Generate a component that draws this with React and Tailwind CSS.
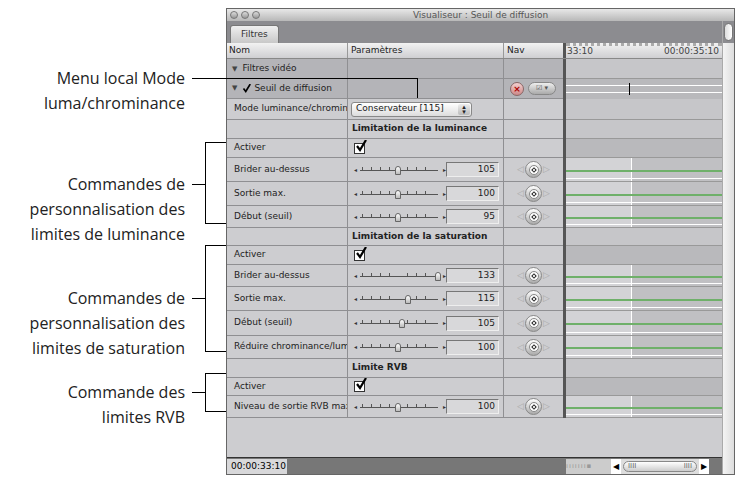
import React from "react";

const F = { fontFamily: '"Lucida Grande","DejaVu Sans","Liberation Sans",sans-serif' };

function Slider({ pos }) {
  return (
    <div className="relative w-[92px] h-[14px] ml-[6px]">
      <span className="absolute left-0 top-[4px] text-[6px] leading-none text-[#333]">◂</span>
      <div className="absolute left-[6px] right-[8px] top-[7px] h-[1px] bg-[#555]" />
      {[0, 1, 2, 3, 5, 6, 7].map((i) => (
        <div key={i} className="absolute top-[4px] w-[1px] h-[3px] bg-[#555]" style={{ left: 8 + i * 9 }} />
      ))}
      <span className="absolute right-0 top-[4px] text-[6px] leading-none text-[#333]">▸</span>
      <div className="absolute top-[3px] w-[6px] h-[9px] bg-gradient-to-b from-white to-[#bbb] border border-[#666] rounded-t-[3px]" style={{ left: pos }} />
    </div>
  );
}

function Nav() {
  return (
    <div className="flex items-center justify-center gap-[1px] w-full">
      <span className="text-[9px] text-[#aaa] leading-none">◁</span>
      <div className="w-[17px] h-[17px] rounded-full bg-gradient-to-b from-white to-[#aaa] border border-[#888] flex items-center justify-center">
        <div className="w-[10px] h-[10px] rounded-full bg-white border border-[#888] flex items-center justify-center">
          <div className="w-[4px] h-[4px] rotate-45 border-[1.5px] border-[#222]" />
        </div>
      </div>
      <span className="text-[9px] text-[#aaa] leading-none">▷</span>
    </div>
  );
}

const Tick = ({ cls }) => (
  <svg viewBox="0 0 12 12" className={cls}><path d="M2 6 L5 10 L11 0" fill="none" stroke="#000" strokeWidth="2.2" /></svg>
);

function Check() {
  return (
    <div className="ml-[6px] w-[11px] h-[11px] border border-[#333] bg-white relative">
      <Tick cls="absolute left-[0px] top-[-4px] w-[12px] h-[12px]" />
    </div>
  );
}

function TL({ kind }) {
  if (kind === "dark") return <div className="h-full bg-[#b9b9bc] border-b border-[#999]" />;
  if (kind === "seuil")
    return (
      <div className="h-full bg-[#b9b9bc] flex flex-col justify-center gap-[6px] relative">
        <div className="h-[1px] bg-white" />
        <div className="h-[1px] bg-white" />
        <div className="absolute left-[63px] top-[4px] w-[1px] h-[12px] bg-black" />
      </div>
    );
  if (kind === "slider")
    return (
      <div className="h-full flex relative border-b border-[#999]">
        <div className="w-[66px] bg-[#d3d3d6] border-r border-white" />
        <div className="flex-1 bg-[#c0c0c3]" />
        <div className="absolute left-0 right-0 top-1/2 h-[2px] bg-[#6fb06a]" />
        <div className="absolute left-0 right-0 bottom-[2px] h-[1px] bg-white" />
      </div>
    );
  return <div className="h-full bg-[#c6c6c9] border-b border-[#999]" />;
}

function Row({ h, nom, params, nav, tl, dark, bold }) {
  const bg = dark ? "bg-[#b4b4b8]" : "bg-[#cdcdd0]";
  return (
    <div className="flex" style={{ height: h }}>
      <div className={`w-[121px] ${bg} border-b border-r border-[#8f8f92] flex items-center text-[9px] text-[#222] overflow-hidden whitespace-nowrap`}>{nom}</div>
      <div className={`w-[156px] ${bg} border-b border-r border-[#8f8f92] flex items-center text-[9px] text-[#222] whitespace-nowrap ${bold ? "font-bold" : ""}`}>{params}</div>
      <div className={`w-[59px] ${bg} border-b border-[#8f8f92] flex items-center`}>{nav}</div>
      <div className="w-[3px] bg-[#555]" />
      <div className="w-[156px]"><TL kind={tl} /></div>
    </div>
  );
}

function SRow({ h, nom, pos, val }) {
  return (
    <Row
      h={h}
      nom={<span className="pl-[7px]">{nom}</span>}
      params={
        <div className="flex items-center w-full">
          <Slider pos={pos} />
          <div className="ml-auto mr-[4px] w-[53px] h-[15px] bg-[#d8d8da] border border-t-[#777] border-l-[#777] border-r-[#eee] border-b-[#eee] text-right pr-[3px] text-[9px] leading-[13px]">{val}</div>
        </div>
      }
      nav={<Nav />}
      tl="slider"
    />
  );
}

function Section({ h, title }) {
  return <Row h={h} nom="" params={<span className="pl-[4px]">{title}</span>} bold tl="light" />;
}
function Act({ h }) {
  return <Row h={h} nom={<span className="pl-[7px]">Activer</span>} params={<Check />} tl="dark" />;
}

const Label = ({ top, lines }) => (
  <div className="absolute right-[41px] text-right text-[16px] leading-[25px] text-[#222]" style={{ top, fontFamily: '"Open Sans","Liberation Sans",sans-serif' }}>
    {lines.map((l) => (<div key={l} className="whitespace-nowrap">{l}</div>))}
  </div>
);

const Bracket = ({ top, bottom, mid }) => (
  <>
    <div className="absolute left-[205px] w-[21px] border-t border-l border-b border-black" style={{ top, height: bottom - top }} />
    <div className="absolute left-[192px] w-[13px] h-[1px] bg-black" style={{ top: mid }} />
  </>
);

export default function App() {
  return (
    <div className="w-[737px] h-[478px] bg-white flex relative overflow-hidden" style={F}>
      <div className="w-[226px] shrink-0 relative">
        <Label top={66} lines={["Menu local Mode", "luma/chrominance"]} />
        <Label top={172} lines={["Commandes de", "personnalisation des", "limites de luminance"]} />
        <Bracket top={142} bottom={224} mid={184} />
        <Label top={286} lines={["Commandes de", "personnalisation des", "limites de saturation"]} />
        <Bracket top={245} bottom={352} mid={298} />
        <Label top={380} lines={["Commande des", "limites RVB"]} />
        <Bracket top={373} bottom={412} mid={392} />
      </div>
      <div className="absolute left-[192px] top-[78px] w-[226px] h-[1px] bg-black z-10" />
      <div className="absolute left-[417px] top-[78px] w-[1px] h-[20px] bg-black z-10" />

      <div className="mt-[8px] w-[509px] h-[467px] flex flex-col border border-[#666] bg-[#cdcdd0]">
        <div className="h-[12px] bg-gradient-to-b from-[#e8e8e8] to-[#b8b8b8] flex items-center relative">
          <div className="flex gap-[3px] pl-[3px]">
            {[0, 1, 2].map((i) => (<div key={i} className="w-[8px] h-[8px] rounded-full border border-[#777] bg-gradient-to-b from-[#ddd] to-[#999]" />))}
          </div>
          <div className="absolute inset-0 text-center text-[9px] leading-[12px] text-[#555]">Visualiseur : Seuil de diffusion</div>
        </div>
        <div className="flex flex-1 min-h-0">
          <div className="w-[495px] flex flex-col">
            <div className="h-[22px] bg-[#8c8c90] flex items-end pl-[3px]">
              <div className="h-[18px] px-[10px] bg-gradient-to-b from-[#f0f0f0] to-[#c8c8c8] border border-[#777] border-b-0 rounded-t-[3px] text-[9px] leading-[17px] text-[#333]">Filtres</div>
            </div>
            <div className="flex h-[16px] bg-gradient-to-b from-[#f2f2f2] to-[#cfcfd2] border-b border-[#888] text-[9px] text-[#222]">
              <div className="w-[121px] border-r border-[#999] pl-[2px] leading-[15px]">Nom</div>
              <div className="w-[156px] border-r border-[#999] pl-[3px] leading-[15px]">Paramètres</div>
              <div className="w-[59px] pl-[3px] leading-[15px]">Nav</div>
              <div className="w-[3px] bg-[#555]" />
              <div className="w-[156px] flex justify-between px-[1px] leading-[15px] text-[#444] border-t-[3px] border-dotted border-[#aaa]"><span className="-mt-[2px]">33:10</span><span className="-mt-[2px] pr-[2px]">00:00:35:10</span></div>
            </div>
            <Row h={20} dark nom={<span className="pl-[5px]"><span className="text-[7px] text-[#444] mr-[5px]">▼</span>Filtres vidéo</span>} params="" tl="light" />
            <Row h={20} dark nom={<span className="pl-[5px] flex items-center"><span className="text-[7px] text-[#444] mr-[5px]">▼</span><Tick cls="w-[9px] h-[9px] mr-[3px]" />Seuil de diffusion</span>} params=""
              nav={<div className="flex items-center gap-[4px] pl-[6px]"><div className="w-[14px] h-[14px] rounded-full bg-gradient-to-b from-[#f4d0d0] to-[#c88] border border-[#866] text-[9px] leading-[12px] text-center text-[#a00] font-bold">×</div><div className="w-[28px] h-[13px] rounded-full bg-gradient-to-b from-[#eee] to-[#aaa] border border-[#888] text-[7px] leading-[11px] text-center text-[#555]">☑ ▾</div></div>} tl="seuil" />
            <Row h={21} nom={<span className="pl-[7px]">Mode luminance/chrominance</span>}
              params={<div className="ml-[3px] w-[121px] h-[15px] rounded-[3px] bg-gradient-to-b from-[#fff] to-[#ddd] border border-[#888] flex items-center pl-[4px] pr-[1px] text-[9px]"><span className="flex-1">Conservateur [115]</span><span className="w-[12px] h-[11px] rounded-[2px] bg-gradient-to-b from-[#eee] to-[#bbb] text-[7px] leading-[5px] text-center pt-[1px]">▴<br />▾</span></div>}
              tl="light" />
            <Section h={19} title="Limitation de la luminance" />
            <Act h={19} />
            <SRow h={24} nom="Brider au-dessus" pos={41} val="105" />
            <SRow h={24} nom="Sortie max." pos={41} val="100" />
            <SRow h={22} nom="Début (seuil)" pos={41} val="95" />
            <Section h={18} title="Limitation de la saturation" />
            <Act h={19} />
            <SRow h={22} nom="Brider au-dessus" pos={81} val="133" />
            <SRow h={24} nom="Sortie max." pos={51} val="115" />
            <SRow h={25} nom="Début (seuil)" pos={45} val="105" />
            <SRow h={23} nom="Réduire chrominance/luminance" pos={41} val="100" />
            <Section h={19} title="Limite RVB" />
            <Act h={18} />
            <SRow h={22} nom="Niveau de sortie RVB max" pos={41} val="100" />
            <div className="flex-1 bg-[#cdcdd0]" />
            <div className="h-[17px] bg-[#777] border-t border-[#333] flex items-center">
              <div className="w-[60px] h-[15px] bg-[#d8d8da] text-[9px] leading-[15px] pl-[4px]">00:00:33:10</div>
              <div className="ml-auto flex items-center h-[15px]">
                <div className="w-[45px] h-full bg-[#ccc] text-[7px] text-[#999] leading-[15px] tracking-[1px]">ııııııı▪</div>
                <div className="w-[10px] h-full bg-white text-[8px] leading-[15px] text-center">◀</div>
                <div className="w-[78px] h-full bg-[#ddd] flex items-center px-[2px]"><div className="w-full h-[11px] rounded-full border border-[#888] bg-gradient-to-b from-white to-[#ccc] flex justify-between px-[4px] text-[7px] leading-[9px] text-[#666]"><span>IIII</span><span>IIII</span></div></div>
                <div className="w-[10px] h-full bg-white text-[8px] leading-[15px] text-center">▶</div>
                <div className="w-[13px]" />
              </div>
            </div>
          </div>
          <div className="flex-1 bg-gradient-to-r from-[#f4f4f4] to-[#ddd] border-l border-[#aaa] flex flex-col">
            <div className="h-[22px] bg-[#8c8c90] flex items-center justify-center"><div className="w-[9px] h-[18px] rounded-full bg-gradient-to-r from-[#ddd] to-white border border-[#777]" /></div>
          </div>
        </div>
      </div>
    </div>
  );
}
